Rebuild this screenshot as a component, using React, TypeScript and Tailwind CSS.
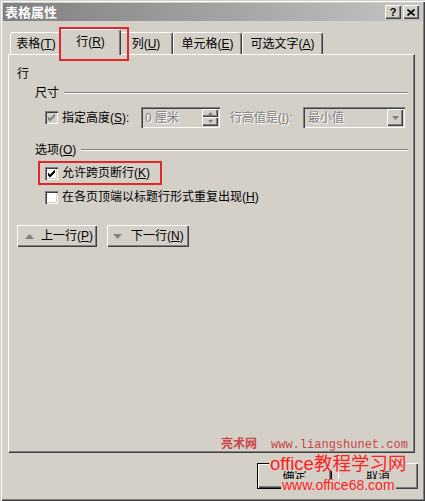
import React from "react";

// Win2000 风格的「表格属性」对话框 · 行 选项卡

const raised =
  "bg-[#d4d0c8] shadow-[inset_1px_1px_0_#fff,inset_-1px_-1px_0_#404040,inset_-2px_-2px_0_#808080]";
const sunken =
  "shadow-[inset_1px_1px_0_#808080,inset_2px_2px_0_#404040,inset_-1px_-1px_0_#fff,inset_-2px_-2px_0_#d4d0c8]";
const greyText = "text-[#808080] [text-shadow:1px_1px_0_#fff]";

function Key({ k }: { k: string }) {
  return (
    <>
      (<span className="underline underline-offset-[1px]">{k}</span>)
    </>
  );
}

function Check({ checked, disabled }: { checked?: boolean; disabled?: boolean }) {
  return (
    <span
      className={`relative inline-block w-[13px] h-[13px] shrink-0 ${
        disabled ? "bg-[#d4d0c8]" : "bg-white"
      } ${sunken}`}
    >
      {checked && (
        <svg width="13" height="13" viewBox="0 0 13 13" className="absolute inset-0">
          <path
            d="M3 5.5 L5 7.5 L10 2.5 V5.5 L5 10.5 L3 8.5 Z"
            fill={disabled ? "#808080" : "#000"}
          />
        </svg>
      )}
    </span>
  );
}

function GroupHeader({ children, className = "" }: { children: React.ReactNode; className?: string }) {
  return (
    <div className={`h-[18px] flex items-center ${className}`}>
      <span className="leading-none">{children}</span>
      <div className="flex-1 ml-[5px] h-[2px] border-t border-[#808080] border-b border-b-white" />
    </div>
  );
}

function Tab({ children, className }: { children: React.ReactNode; className: string }) {
  return (
    <div
      className={`relative flex items-center justify-center rounded-t-[3px] border-t border-l border-white border-r border-r-[#404040] bg-[#d4d0c8] shadow-[inset_-1px_0_0_#808080] leading-none ${className}`}
    >
      {children}
    </div>
  );
}

function Tri({ up }: { up?: boolean }) {
  return (
    <svg width="9" height="5" viewBox="0 0 9 5">
      <path d={up ? "M0 5 L4.5 0 L9 5 Z" : "M0 0 L9 0 L4.5 5 Z"} fill="#808080" />
    </svg>
  );
}

export default function App() {
  return (
    <div className="relative w-[425px] h-[501px] overflow-hidden bg-[#d4d0c8] p-[3px] text-[12px] text-black font-['Liberation_Sans','Noto_Sans_CJK_SC',sans-serif] shadow-[inset_1px_1px_0_#d4d0c8,inset_2px_2px_0_#fff,inset_-1px_-1px_0_#404040,inset_-2px_-2px_0_#808080]">
      {/* 标题栏 */}
      <div className="h-[18px] flex items-center justify-between pl-[2px] pr-[3px] bg-linear-to-r from-[#808080] to-[#c4c4c4]">
        <span className="text-white font-bold text-[13px] leading-none">表格属性</span>
        <div className="flex gap-[2px]">
          <button className={`w-[16px] h-[14px] flex items-center justify-center text-[11px] font-bold leading-none ${raised}`}>
            ?
          </button>
          <button className={`w-[16px] h-[14px] flex items-center justify-center ${raised}`}>
            <svg width="8" height="7" viewBox="0 0 8 7">
              <path d="M0.5 0.5 L7.5 6.5 M7.5 0.5 L0.5 6.5" stroke="#000" strokeWidth="1.6" />
            </svg>
          </button>
        </div>
      </div>

      <div className="pl-[5px] pt-[8px]">
        {/* 选项卡 */}
        <div className="h-[25px] flex items-end pl-[2px]">
          <Tab className="w-[52px] h-[22px]">
            表格<Key k="T" />
          </Tab>
          <Tab className="w-[61px] h-[26px] -mx-[2px] -mb-[1px] z-10 pb-[2px]">
            行<Key k="R" />
          </Tab>
          <Tab className="w-[54px] h-[22px]">
            列<Key k="U" />
          </Tab>
          <Tab className="w-[69px] h-[22px]">
            单元格<Key k="E" />
          </Tab>
          <Tab className="w-[81px] h-[22px]">
            可选文字<Key k="A" />
          </Tab>
        </div>

        {/* 面板 */}
        <div className="w-[407px] h-[399px] border border-t-white border-l-white border-r-[#404040] border-b-[#404040] shadow-[inset_-1px_-1px_0_#808080] pl-[8px] pr-[6px] pt-[9px]">
          <div className="h-[20px] flex items-center leading-none">行</div>

          <div className="ml-[18px]">
            <GroupHeader>尺寸</GroupHeader>

            <div className="mt-[5px] h-[21px] flex items-center pl-[10px]">
              <Check checked disabled />
              <span className="ml-[4px] w-[79px] leading-none">
                指定高度<Key k="S" />:
              </span>
              <div className={`relative w-[79px] h-[21px] bg-[#d4d0c8] flex items-center pl-[4px] ${sunken}`}>
                <span className={`leading-none ${greyText}`}>0 厘米</span>
                <div className="absolute right-[2px] top-[2px] w-[16px] h-[17px] flex flex-col">
                  <div className={`h-[8px] flex items-center justify-center ${raised}`}>
                    <svg width="5" height="3" viewBox="0 0 5 3">
                      <path d="M0 3 L2.5 0 L5 3 Z" fill="#808080" />
                    </svg>
                  </div>
                  <div className={`h-[9px] flex items-center justify-center ${raised}`}>
                    <svg width="5" height="3" viewBox="0 0 5 3">
                      <path d="M0 0 L5 0 L2.5 3 Z" fill="#808080" />
                    </svg>
                  </div>
                </div>
              </div>
              <span className={`ml-[10px] w-[73px] leading-none ${greyText}`}>
                行高值是<Key k="I" />:
              </span>
              <div className={`relative w-[102px] h-[21px] bg-[#d4d0c8] flex items-center pl-[5px] ${sunken}`}>
                <span className={`leading-none ${greyText}`}>最小值</span>
                <div className={`absolute right-[2px] top-[2px] w-[16px] h-[17px] flex items-center justify-center ${raised}`}>
                  <svg width="7" height="4" viewBox="0 0 7 4">
                    <path d="M0 0 L7 0 L3.5 4 Z" fill="#808080" />
                  </svg>
                </div>
              </div>
            </div>

            <GroupHeader className="mt-[13px]">
              选项<Key k="O" />
            </GroupHeader>

            <div className="mt-[2px] ml-[3px] w-[124px] h-[24px] border-2 border-[#e0282b] flex items-center pl-[5px]">
              <Check checked />
              <span className="ml-[4px] leading-none">
                允许跨页断行<Key k="K" />
              </span>
            </div>

            <div className="mt-[3px] h-[18px] flex items-center pl-[10px]">
              <Check />
              <span className="ml-[4px] leading-none">
                在各页顶端以标题行形式重复出现<Key k="H" />
              </span>
            </div>
          </div>

          <div className="mt-[19px] flex gap-[10px]">
            <button className={`w-[80px] h-[22px] flex items-center pl-[8px] ${raised}`}>
              <Tri up />
              <span className="ml-[7px] leading-none">
                上一行<Key k="P" />
              </span>
            </button>
            <button className={`w-[82px] h-[22px] flex items-center pl-[6px] ${raised}`}>
              <Tri />
              <span className="ml-[9px] leading-none">
                下一行<Key k="N" />
              </span>
            </button>
          </div>
        </div>

        {/* 底部按钮 */}
        <div className="mt-[10px] pl-[249px] flex gap-[6px]">
          <button className="w-[75px] h-[26px] border border-black">
            <div className={`w-full h-full flex items-center justify-center leading-none ${raised}`}>确定</div>
          </button>
          <button className={`w-[80px] h-[26px] flex items-center justify-center leading-none ${raised}`}>
            取消
          </button>
        </div>
      </div>

      {/* 红框标注 */}
      <div className="absolute left-[59px] top-[27px] w-[70px] h-[34px] border-2 border-[#e0282b] z-20" />

      {/* 水印 */}
      <div className="absolute left-[221px] top-[438px] leading-[12px] text-[#c84646] whitespace-nowrap z-20">
        <span className="text-[12px] font-bold">亮术网</span>
        <span className="ml-[14px] text-[12px] font-['Liberation_Mono',monospace]">www.liangshunet.com</span>
      </div>
      <div className="absolute left-[269px] top-[456px] px-[1px] bg-[#d4d0c8] text-[18.5px] leading-[15px] text-[#ff1e1e] whitespace-nowrap z-20">
        office教程学习网
      </div>
      <div className="absolute left-[281px] top-[479px] px-[1px] bg-[#d4d0c8] text-[14px] leading-[12px] text-[#ff1e1e] whitespace-nowrap z-20">
        www.office68.com
      </div>
    </div>
  );
}
